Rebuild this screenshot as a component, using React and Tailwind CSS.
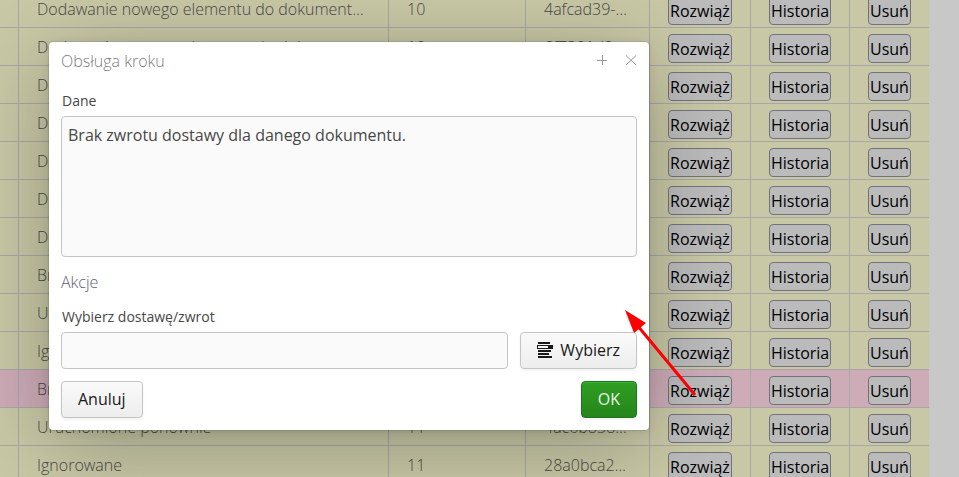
const ROWS = [
  { name: "Dodawanie nowego elementu do dokumentu magazynowego", count: 10, id: "4afcad39-…" },
  { name: "Dodawanie nowego elementu do dokumentu magazynowego", count: 10, id: "6f7301d0…" },
  { name: "Dodawanie" },
  { name: "Dodawanie" },
  { name: "Dodawanie" },
  { name: "Dodawanie" },
  { name: "Dodawanie" },
  { name: "Brak" },
  { name: "Uruchomione" },
  { name: "Ignorowane" },
  { name: "Brak", error: true },
  { name: "Uruchomione ponownie", count: 11, id: "4ac6b838…" },
  { name: "Ignorowane", count: 11, id: "28a0bca2…" },
];

const ACTIONS = ["Rozwiąż", "Historia", "Usuń"];

function StepsTable() {
  return (
    <table className="-mt-[10px] w-full table-fixed border-separate border-spacing-0">
      <colgroup>
        <col className="w-[19px]" />
        <col />
        <col className="w-[137px]" />
        <col className="w-[124px]" />
        <col className="w-[101px]" />
        <col className="w-[99px]" />
        <col className="w-[79px]" />
      </colgroup>
      <tbody>
        {ROWS.map((row, i) => (
          <tr
            key={i}
            className={`h-[38px] *:border-b *:border-[#a7a7a7] *:p-0 *:not-last:border-r ${
              row.error ? "bg-[#cdabb7]" : "bg-[#c8c8a6]"
            }`}
          >
            <td />
            <td>
              <div className="truncate px-[18px] font-light">{row.name}</div>
            </td>
            <td>
              <div className="truncate px-[18px] font-light">{row.count}</div>
            </td>
            <td>
              <div className="truncate px-[18px] font-light">{row.id}</div>
            </td>
            {ACTIONS.map((label) => (
              <td key={label}>
                <div className="flex pt-1 pl-[18px]">
                  <button
                    type="button"
                    className="h-[29px] rounded border border-[#72727c] bg-[#bbbbbc] px-px text-black"
                  >
                    {label}
                  </button>
                </div>
              </td>
            ))}
          </tr>
        ))}
      </tbody>
    </table>
  );
}

function ListIcon() {
  return (
    <svg width="16" height="16" viewBox="0 0 16 16" fill="currentColor" aria-hidden="true">
      <path d="M1 0h12v2H1zM0 3h16v4H0zM1 8h13v2H1zM1 11h11v2H1zM1 14h14v2H1z" />
      <path d="M1 4h10v2H1z" fill="#f7f7f7" />
    </svg>
  );
}

function StepDialog() {
  return (
    <div
      role="dialog"
      aria-labelledby="dialog-title"
      className="w-[600px] rounded bg-white px-3 pb-3 shadow-[0_2px_10px_rgba(0,0,0,0.1),0_16px_80px_-6px_rgba(0,0,0,0.3),0_0_0_1px_rgba(0,0,0,0.09)]"
    >
      <header className="flex h-[38px] items-center justify-between">
        <h2 id="dialog-title" className="font-light text-[#7c7c7c]">
          Obsługa kroku
        </h2>
        <div className="flex gap-[17px] text-[#999999]">
          <button type="button" aria-label="Powiększ">
            <svg width="12" height="12" viewBox="0 0 12 12" stroke="currentColor">
              <path d="M1 5.500h10M6.500 0v10" />
            </svg>
          </button>
          <button type="button" aria-label="Zamknij">
            <svg width="12" height="12" viewBox="0 0 12 12" stroke="currentColor">
              <path d="M1 0.500l10 9.500M11 0.500l-10 9.500" />
            </svg>
          </button>
        </div>
      </header>

      <label htmlFor="data" className="mt-[10px] block pl-px text-sm leading-[22px]">
        Dane
      </label>
      <textarea
        id="data"
        readOnly
        defaultValue="Brak zwrotu dostawy dla danego dokumentu."
        className="mt-1 block h-[141px] w-full resize-none rounded border border-[#c5c5c5] bg-[#fafafa] px-[6px] py-[6px]"
      />

      <h3 className="mt-[13px] font-light text-[#5f5f78]">Akcje</h3>
      <label htmlFor="delivery" className="mt-3 block pl-px text-sm leading-[22px]">
        Wybierz dostawę/zwrot
      </label>
      <div className="mt-1 flex gap-3">
        <input
          id="delivery"
          type="text"
          className="h-[37px] min-w-0 flex-1 rounded border border-[#c5c5c5] bg-[#fafafa] px-[6px]"
        />
        <button
          type="button"
          className="flex h-[37px] items-center gap-[7px] rounded border border-[#c5c5c5] bg-linear-to-b from-[#fafafa] to-[#ededed] px-4 pb-[2px] text-[#191919] shadow-[0_2px_3px_rgba(0,0,0,0.05)]"
        >
          <ListIcon />
          Wybierz
        </button>
      </div>

      <footer className="mt-3 flex justify-between">
        <button
          type="button"
          className="h-[37px] rounded border border-[#c5c5c5] bg-linear-to-b from-[#fafafa] to-[#ededed] px-4 pb-[2px] text-[#191919] shadow-[0_2px_3px_rgba(0,0,0,0.05)]"
        >
          Anuluj
        </button>
        <button
          type="button"
          className="h-[37px] rounded border border-[#1d781d] bg-linear-to-b from-[#2f9f22] to-[#26851c] px-4 pb-[2px] text-[#eaf4e9] shadow-[0_2px_3px_rgba(0,0,0,0.05),inset_0_1px_0_#40b332]"
        >
          OK
        </button>
      </footer>
    </div>
  );
}

function Arrow() {
  return (
    <svg
      className="pointer-events-none absolute top-[310px] left-[625px]"
      width="72"
      height="88"
      viewBox="0 0 72 88"
      aria-hidden="true"
    >
      <path d="M12 15L70 85" stroke="#ff0000" strokeWidth="3" />
      <path d="M0 0L21 13L9 23Z" fill="#ff0000" />
    </svg>
  );
}

export default function App() {
  return (
    <div className="relative h-screen overflow-hidden bg-[#c8c8c8] pr-[30px] font-['Open_Sans','Noto_Sans',sans-serif] text-base text-[#474747]">
      <StepsTable />
      <div className="absolute inset-0 pt-[42px] pl-[49px]">
        <StepDialog />
      </div>
      <Arrow />
    </div>
  );
}
